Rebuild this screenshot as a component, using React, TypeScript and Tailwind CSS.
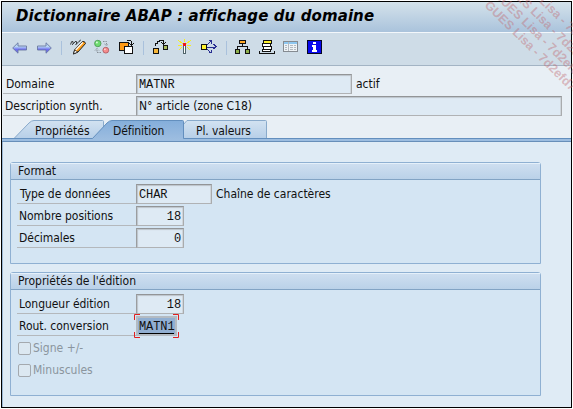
import type { ReactNode } from 'react';

const UI = "font-['DejaVu_Sans_Condensed','DejaVu_Sans',sans-serif] [font-stretch:condensed]";
const MONO = "font-['Liberation_Mono',monospace] pt-px tracking-[-0.1px]";

function Icon({ children, className }: { children: ReactNode; className: string }) {
  return (
    <svg className={`h-4 w-4 shrink-0 ${className}`} viewBox="0 0 16 16" fill="none" shapeRendering="crispEdges">
      {children}
    </svg>
  );
}

function Separator({ className }: { className: string }) {
  return <div className={`h-[14px] w-px shrink-0 bg-[#a9c1dc] ${className}`} />;
}

function Toolbar() {
  return (
    <div className="flex h-[33px] shrink-0 items-start border-b border-[#a3b4c4] bg-[#cedce7] pt-[6px]">
      <svg className="mt-[3px] ml-[10px] h-3 w-[15px]" viewBox="0 0 15 12">
        <defs>
          <linearGradient id="arrow" x1="0" y1="0" x2="0" y2="1">
            <stop offset="0.35" stopColor="#b9d8f4" />
            <stop offset="0.65" stopColor="#6e6df0" />
          </linearGradient>
        </defs>
        <path d="M.7 6 6 .8V4h8.500v4H6v3.200Z" fill="url(#arrow)" stroke="#6977a0" strokeWidth=".9" />
      </svg>
      <svg className="mt-[3px] ml-[10px] h-3 w-[15px]" viewBox="0 0 15 12">
        <path d="M14.300 6 9 .8V4H.5v4H9v3.200Z" fill="url(#arrow)" stroke="#6977a0" strokeWidth=".9" />
      </svg>
      <Separator className="mt-[2px] ml-[9px]" />
      <svg className="ml-[8px] h-4 w-[17px]" viewBox="0 0 17 16">
        <path d="M.5 5.500 1.500 3Q2.500 1 3 3t-.5 2.500T5 3q1-2 1.500 0T6 5.500 8.500 3t1-1" fill="none" stroke="#111" strokeWidth=".8" />
        <path d="M4.500 11 12.500 2.500q2.500-.5 3 2L8 13l-4.500 2Z" fill="#ff9f1a" stroke="#111" strokeWidth=".9" />
        <path d="M4.700 11 3.500 15 7.800 13Z" fill="#fff" stroke="#111" strokeWidth=".7" />
        <path d="m5.700 11 7-7.500" stroke="#fff" strokeWidth="1.100" />
      </svg>
      <svg className="ml-[7px] h-4 w-4" viewBox="0 0 16 16">
        <circle cx="3.800" cy="4.500" r="3.200" fill="#6edc70" stroke="#4f9c58" strokeWidth=".9" />
        <circle cx="2.900" cy="3.600" r="1" fill="#d8fbd8" />
        <circle cx="11.800" cy="11.200" r="2.900" fill="#f58c8c" stroke="#b05f66" strokeWidth=".9" />
        <circle cx="10.900" cy="10.300" r=".9" fill="#fbd8d8" />
        <path d="M9 2.500h3.500V6M10.500 5l2 1.500 2-1.500M7 13.500H3V9.500M1 11.500 3 9.500l2 2" stroke="#858d94" strokeDasharray="1.500 1" fill="none" />
      </svg>
      <Icon className="ml-[9px]">
        <path d="M.5 3.500h9v8h-9Z" fill="#ff9a15" stroke="#111" />
        <path d="M5.500 7.500h8v7h-8Z" fill="#fff" stroke="#111" />
        <path d="M8 1.500h4M12.500 2v4M10 4l2.500 2L15 4" stroke="#111" />
      </Icon>
      <Separator className="mt-[2px] ml-[8px]" />
      <Icon className="ml-[9px]">
        <path d="M.5 9.500h5v5h-5Z" fill="#f6b638" stroke="#111" />
        <path d="M10.500 6.500h4v4h-4Z" fill="#a6bb5c" stroke="#111" />
        <path d="M2.500 7V4.500h2v-2h2M6 1.500h4v3M8 3l2.500 2L13 3" stroke="#111" />
      </Icon>
      <Icon className="ml-[8px]">
        <path d="m1 1 5 4m8-4L9 5M1 6.500h4m5 0h4M2 11l3-3m8 3-3-3M7.500 0v3" stroke="#f8ee24" />
        <path d="M6.500 6.500h2v8h-2Z" fill="#fff" stroke="#50656b" />
        <path d="M6 4h3v3H6Z" fill="#ee1720" />
      </Icon>
      <Icon className="ml-[8px]">
        <path d="M6 8h9M6 6l4-4M6 10l4 4M7.500 1.500h3v3m-3 9h3v-3M12.500 5l2.500 2.500-2.500 2.500" stroke="#282e91" />
        <path d="M.5 5.500h5v5h-5Z" fill="#fff22e" stroke="#111" />
      </Icon>
      <Separator className="mt-[2px] ml-[9px]" />
      <Icon className="ml-[8px]">
        <path d="M7.500 5v3M2.500 10V7.500h10V10" stroke="#111" />
        <path d="M4.500 1.500h6v3h-6Z" fill="#ffa829" stroke="#111" />
        <path d="M.5 10.500h4v4h-4Zm10 0h4v4h-4Z" fill="#8db04d" stroke="#111" />
      </Icon>
      <Icon className="ml-[8px]">
        <path d="M4.500 1.500h8v3h-8Z" fill="#fff22e" stroke="#111" />
        <path d="M3.500 4.500h8v3h-8Zm1 3h8v3h-8Zm-1 3h8v2h-8Z" fill="#fff" stroke="#111" />
        <path d="M.5 12v2.500h15V12" stroke="#111" />
      </Icon>
      <Icon className="ml-[8px]">
        <path d="M.5 2.500h14v10H.5Z" fill="#eef3f6" stroke="#858b91" />
        <path d="M1 3h13v2H1Z" fill="#8dc7f0" />
        <path d="M5.500 3v9M2 6.500h2m-2 2h2m-2 2h2M7 6.500h3m1 0h2m-6 2h3m1 0h2m-6 2h3m1 0h2" stroke="#b3bac0" />
      </Icon>
      <Icon className="ml-[8px]">
        <path d="M.5 1.500h14v13H.5Z" fill="#0909ee" stroke="#060624" />
        <path d="M6 3h3v2H6ZM5 6h4v5h1v2H5v-2h1V8H5Z" fill="#fff" />
      </Icon>
    </div>
  );
}

function Label({ children, className }: { children: ReactNode; className: string }) {
  return (
    <div className={`h-5 shrink-0 border-b border-[#b4b8bc] leading-[20px] tracking-[-0.04px] whitespace-nowrap ${className}`}>
      {children}
    </div>
  );
}

function Field({ children, className }: { children: ReactNode; className: string }) {
  return (
    <div className={`h-5 shrink-0 border border-t-[#939597] border-r-[#a9abad] border-b-[#b0b2b4] border-l-[#9b9d9f] bg-[#deeaf4] pl-[2px] leading-[18px] whitespace-nowrap shadow-[inset_1px_1px_1px_#bcc4ca,inset_-1px_0_0_#cfd6dc] ${className}`}>
      {children}
    </div>
  );
}

function Group({ title, className, children }: { title: ReactNode; className: string; children: ReactNode }) {
  return (
    <section className={`w-[531px] rounded-t-[3px] border border-[#8fb0d2] bg-[#d4e5f3] ${className}`}>
      <h2 className="h-[17px] border-b border-[#82a3c4] bg-linear-to-b from-[#cfdff0] to-[#bad1e8] pl-[7px] leading-[17px] shadow-[inset_0_1px_0_#e5f0fa]">
        {title}
      </h2>
      <div className="flex flex-col gap-[2px] pt-[4px] pl-[6px]">{children}</div>
    </section>
  );
}

function Check({ label }: { label: string }) {
  return (
    <div className="flex h-5 items-center text-[#8b959e]">
      <span className="ml-px h-[13px] w-[13px] rounded-[2px] border border-[#a4a9ae] bg-[#dce8f1]" />
      <span className="ml-[2px]">{label}</span>
    </div>
  );
}

function Tabs() {
  return (
    <div className="relative mt-[4px] h-[22px] shrink-0">
      <svg className="block h-[22px] w-full" viewBox="0 0 569 22" preserveAspectRatio="none">
        <defs>
          <linearGradient id="tab" x1="0" y1="0" x2="0" y2="1">
            <stop stopColor="#d2e2f1" />
            <stop offset="1" stopColor="#b7cfe8" />
          </linearGradient>
          <linearGradient id="active" x1="0" y1="0" x2="0" y2="1">
            <stop stopColor="#84aedb" />
            <stop offset="1" stopColor="#9dbde0" />
          </linearGradient>
        </defs>
        <path d="M12 18.500 27 3Q29.500.5 32 .5H100.500Q101.500.5 101.500 1.500V18.500Z" fill="url(#tab)" stroke="#89aacb" />
        <path d="M181 18.500V5l4-4.500H263.500Q264.500.5 264.500 1.500V18.500Z" fill="url(#tab)" stroke="#89aacb" />
        <path d="M0 18.500H569V21.500H0Z" fill="#9cbde0" />
        <path d="M0 18.500H569" stroke="#638fbe" />
        <path d="M90.500 18.500 105 3Q107.500.5 110 .5H180.500Q181.500.5 181.500 1.500V19.500H90.500Z" fill="url(#active)" />
        <path d="M90.500 18.500 105 3Q107.500.5 110 .5H180.500Q181.500.5 181.500 1.500V18.500" fill="none" stroke="#638fbe" />
        <path d="M0 21.500H569" stroke="#688fb9" />
      </svg>
      <span className="absolute top-[2px] left-[33px] leading-[18px]">Propriétés</span>
      <span className="absolute top-[2px] left-[111px] leading-[18px] tracking-[-0.1px]">Définition</span>
      <span className="absolute top-[2px] left-[194px] leading-[18px] tracking-[-0.1px]">Pl. valeurs</span>
    </div>
  );
}

function Watermark() {
  return (
    <div className="pointer-events-none absolute inset-0 overflow-hidden">
      <svg className="h-full w-full" viewBox="0 0 573 409">
        <g className="font-['Liberation_Sans',Arial,sans-serif] text-[12.500px] font-bold" fill="#c06c74" fillOpacity=".43">
          <text transform="translate(484 6) rotate(44.500)">GUES Lisa - 7d2efd74</text>
          <text transform="translate(493 -4.500) rotate(44.500)">GUES Lisa - 7d2efd</text>
          <text transform="translate(502 -15) rotate(44.500)">GUES Lisa - 7d2e</text>
          <text transform="translate(511 -25.500) rotate(44.500)">GUES Lisa - 7d</text>
        </g>
      </svg>
    </div>
  );
}

export default function App() {
  return (
    <div className={`relative h-[409px] w-[573px] overflow-hidden bg-white p-px text-[12px] text-[#111] ${UI}`}>
      <main className="flex h-[407px] w-[571px] flex-col border border-black bg-[#e8eff5]">
        <h1 className="h-[31px] shrink-0 border-b border-[#f3f7fb] bg-linear-to-b from-[#d4e2eb] to-[#aac3dc] pl-[14px] font-['DejaVu_Sans',sans-serif] text-[15px] leading-[29px] font-bold tracking-[0.1px] whitespace-nowrap text-black italic [font-stretch:normal]">
          Dictionnaire ABAP : affichage du domaine
        </h1>
        <Toolbar />
        <div className="flex h-[50px] shrink-0 flex-col gap-[2px] pt-[8px] pl-px">
          <div className="flex">
            <Label className="w-[133px] pl-[3px]">Domaine</Label>
            <Field className={`w-[216px] ${MONO}`}>MATNR</Field>
            <span className="ml-[4px] leading-[20px]">actif</span>
          </div>
          <div className="flex">
            <Label className="w-[133px] pl-[2px]">Description synth.</Label>
            <Field className="w-[426px]">N° article (zone C18)</Field>
          </div>
        </div>
        <Tabs />
        <div className="flex-1 border-l border-[#9bb8d5] bg-[#dfebf5] pt-[20px] pl-[7px]">
          <Group title="Format" className="h-[102px]">
            <div className="flex">
              <Label className="w-[119px] pl-[3px]">Type de données</Label>
              <Field className={`w-[76px] ${MONO}`}>CHAR</Field>
              <span className="ml-[4px] leading-[20px]">Chaîne de caractères</span>
            </div>
            <div className="flex">
              <Label className="w-[119px] pl-[2px]">Nombre positions</Label>
              <Field className={`w-12 pr-[2px] text-right ${MONO}`}>18</Field>
            </div>
            <div className="flex">
              <Label className="w-[119px] pl-[2px]">Décimales</Label>
              <Field className={`w-12 pr-[2px] text-right ${MONO}`}>0</Field>
            </div>
          </Group>
          <Group title="Propriétés de l'édition" className="mt-[8px] h-[124px]">
            <div className="flex">
              <Label className="w-[119px] pl-[2px]">Longueur édition</Label>
              <Field className={`w-12 pr-[2px] text-right ${MONO}`}>18</Field>
            </div>
            <div className="flex">
              <Label className="w-[119px] pl-[2px]">Rout. conversion</Label>
              <div className="relative h-5 w-[41px]">
                <div className="h-5 border-2 border-[#b4bbc2] bg-[#91afd2] pl-px font-['Liberation_Mono',monospace] leading-[18px] tracking-[-0.1px]">
                  <span className="block h-[16px] w-[35px] border-b border-black">MATN1</span>
                </div>
                <svg className="absolute -top-[2px] -left-[2px] h-6 w-[45px]" viewBox="0 0 45 24" fill="none">
                  <path d="M.5 6V.5H6M39 .5h5.500V6M.5 18v5.500H6M39 23.500h5.500V18" stroke="#e02020" />
                </svg>
              </div>
            </div>
            <Check label="Signe +/-" />
            <Check label="Minuscules" />
          </Group>
        </div>
      </main>
      <Watermark />
    </div>
  );
}
